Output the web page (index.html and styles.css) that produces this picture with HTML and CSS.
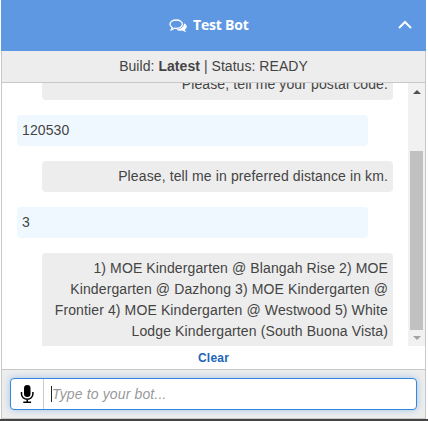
FILE: index.html
```html
<!DOCTYPE html>
<html lang="en">
<head>
<meta charset="utf-8">
<title>Test Bot</title>
<link rel="stylesheet" href="styles.css">
</head>
<body>
<main class="widget">
  <header class="header">
    <div class="title">
      <svg class="chat-icon" viewBox="0 0 18 14"><path d="M7.2 1C3.7 1 1 2.8 1 5.2c0 1.400.9 2.600 2.300 3.400L2.200 10.800c1.400-.3 2.400-.9 3.200-1.600.6.1 1.200.2 1.800.2 3.500 0 6.200-1.900 6.200-4.200S10.700 1 7.200 1Z" fill="none" stroke="#fff" stroke-width="1.300"/><path d="M15 4.200c1.700.8 2.800 2 2.800 3.400 0 1.300-.8 2.400-2 3.200.2.900.8 1.600 1.600 2.300-1.700-.1-3-.6-4-1.500-2.500.4-4.700-.1-6.300-1.200 4.500.1 8-2.300 7.900-6.200Z" fill="#fff"/></svg>
      <span>Test Bot</span>
    </div>
    <svg class="chevron" viewBox="0 0 14 9"><path d="M1 8 7 2l6 6" fill="none" stroke="#fff" stroke-width="2"/></svg>
  </header>
  <div class="status">Build: <b>Latest</b> | Status: READY</div>
  <section class="chat">
    <div class="messages">
      <div class="message bot">Please, tell me your postal code.</div>
      <div class="message user">120530</div>
      <div class="message bot">Please, tell me in preferred distance in km.</div>
      <div class="message user">3</div>
      <div class="message bot last">1) MOE Kindergarten @ Blangah Rise 2) MOE Kindergarten @ Dazhong 3) MOE Kindergarten @ Frontier 4) MOE Kindergarten @ Westwood 5) White Lodge Kindergarten (South Buona Vista)</div>
    </div>
    <div class="scrollbar">
      <svg class="arrow" viewBox="0 0 8 4"><path d="M0 4 4 0l4 4Z" fill="#505050"/></svg>
      <div class="thumb"></div>
      <svg class="arrow" viewBox="0 0 8 4"><path d="M0 0h8L4 4Z" fill="#a3a3a3"/></svg>
    </div>
  </section>
  <div class="clear"><span>Clear</span></div>
  <footer class="footer">
    <div class="field">
      <div class="mic"><svg viewBox="0 0 14 18"><rect x="4" y="0" width="6.500" height="12" rx="3.250"/><path d="M1.500 7v2a5.700 5.300 0 0 0 11.400 0V7M7.200 14.300V17M3.300 17.200h7.800" fill="none" stroke="#000" stroke-width="1.500"/></svg></div>
      <div class="entry"><i class="caret"></i><span>Type to your bot...</span></div>
    </div>
  </footer>
</main>
<div class="page-edge"></div>
</body>
</html>
```
FILE: styles.css
```css
* { box-sizing: border-box; }
body {
  margin: 0;
  height: 421px;
  overflow: hidden;
  background: #fff;
  color: #444;
  font: 14px/21px "Liberation Sans", Arial, sans-serif;
}
svg { display: block; }
.widget {
  width: 425px;
  height: 419px;
  margin-left: 1px;
  display: flex;
  flex-direction: column;
  border: 1px solid #c8c8c8;
  border-top: 0;
}
.header {
  height: 51px;
  flex: none;
  margin: 0 -1px;
  padding: 0 14px 0 0;
  display: grid;
  grid-template-columns: 1fr 14px;
  align-items: center;
  background: #5e97e2;
  color: #fff;
}
.title {
  display: flex;
  align-items: center;
  gap: 6px;
  padding-left: 168px;
  font: bold 14px/20px "Open Sans", sans-serif;
  letter-spacing: -0.2px;
}
.title span { margin-top: -2px; }
.chat-icon { width: 18px; height: 14px; }
.chevron { width: 14px; height: 9px; margin-top: -2px; }
.status {
  height: 32px;
  flex: none;
  padding-top: 5px;
  text-align: center;
  letter-spacing: 0.05px;
  background: #ededed;
  border-bottom: 1px solid #c8c8c8;
}
.chat {
  height: 263px;
  flex: none;
  display: flex;
  justify-content: space-between;
  overflow: hidden;
}
.messages {
  width: 391px;
  height: 263px;
  padding-left: 15px;
  display: flex;
  flex-direction: column;
  justify-content: flex-end;
  gap: 15px;
  overflow: hidden;
  letter-spacing: 0.12px;
}
.message {
  width: 351px;
  flex: none;
  padding: 5px;
  border-radius: 4px;
}
.user { background: #f0f8ff; }
.bot {
  align-self: flex-end;
  text-align: right;
  background: #ededed;
}
.last { padding-bottom: 4px; border-radius: 4px 4px 1px 1px; }
.scrollbar {
  width: 17px;
  padding: 7px 2px 4px;
  display: flex;
  flex-direction: column;
  align-items: center;
  background: #f1f1f1;
}
.arrow { width: 8px; height: 4px; flex: none; }
.thumb {
  width: 13px;
  height: 179px;
  margin: 57px 0 6px;
  flex: none;
  background: #c1c1c1;
}
.clear {
  height: 24px;
  flex: none;
  text-align: center;
  color: #2264b8;
  font: bold 12px/24px "Liberation Sans", Arial, sans-serif;
  letter-spacing: 0.2px;
  border-bottom: 1px solid #c8c8c8;
}
.footer {
  flex: 1;
  padding: 8px 8px 7px;
  background: #ededed;
}
.field {
  height: 32px;
  display: flex;
  border: 1px solid #3288e0;
  border-radius: 4px;
  background: #fff;
  box-shadow: 0 0 7px rgba(70, 145, 225, .45);
  overflow: hidden;
}
.mic {
  width: 33px;
  padding: 6px 0 0 9px;
  border-right: 1px solid #ccc;
}
.mic svg { width: 14px; height: 18px; }
.entry {
  display: flex;
  align-items: center;
  padding-left: 7px;
  color: #999;
  font-style: italic;
  letter-spacing: 0.14px;
}
.caret { width: 1px; height: 16px; background: #222; }
.page-edge { height: 2px; background: #444; }
```
